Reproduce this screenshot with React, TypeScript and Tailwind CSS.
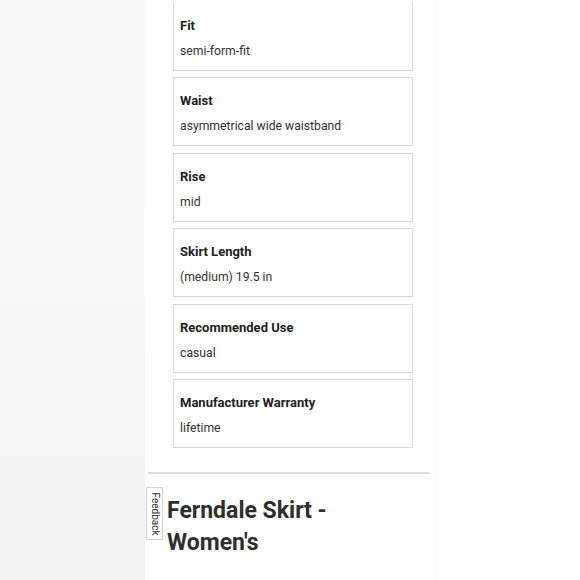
const specs = [
  { label: 'Fit', value: 'semi-form-fit' },
  { label: 'Waist', value: 'asymmetrical wide waistband' },
  { label: 'Rise', value: 'mid' },
  { label: 'Skirt Length', value: '(medium) 19.5 in' },
  { label: 'Recommended Use', value: 'casual' },
  { label: 'Manufacturer Warranty', value: 'lifetime' },
]

export default function App() {
  return (
    <div className="w-[580px] h-[580px] overflow-hidden flex font-['Roboto',sans-serif] text-[#2b2b2b]">
      <div className="w-[145px] h-full bg-gradient-to-b from-[#fbfbfb] via-[#f8f8f8] to-[#f3f3f3]" />

      <div className="w-[288px] h-full bg-white flex flex-col">
        {/* Specs */}
        <div className="pl-[28px] pt-[1.5px] flex flex-col gap-[6.5px]">
          {specs.map((s, i) => (
            <div
              key={s.label}
              className={`w-[240px] h-[69px] border border-[#d9d9d9] px-[6px] pt-[14px] ${i === 0 ? 'border-t-transparent' : ''}`}
            >
              <div className="text-[13px] leading-[18px] font-bold text-[#222]">{s.label}</div>
              <div className="mt-[7px] text-[12.2px] leading-[18px] text-[#333]">{s.value}</div>
            </div>
          ))}
        </div>

        <div className="mt-[24px] mx-[3px] h-[2px] bg-[#dcdcdc]" />

        {/* Title */}
        <div className="mt-[13px] flex gap-[4px] pl-[1px]">
          <div className="w-[17px] h-[53px] border border-[#d4d4d4] bg-white flex items-center justify-center shrink-0">
            <span className="rotate-90 whitespace-nowrap text-[10px] leading-none text-[#333]">Feedback</span>
          </div>
          <h1 className="mt-[8px] text-[23px] leading-[32px] font-bold text-[#2e2e2e]">
            Ferndale Skirt -<br />Women's
          </h1>
        </div>
      </div>

      <div className="flex-1 h-full bg-[#fdfdfd]" />
    </div>
  )
}
